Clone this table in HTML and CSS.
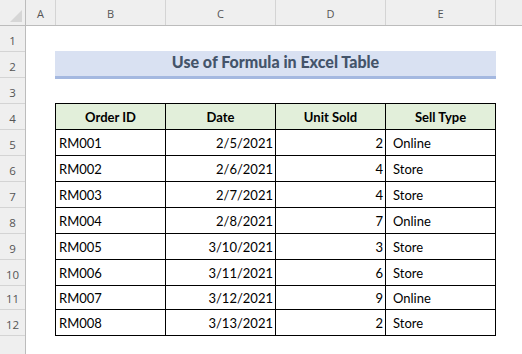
FILE: index.html
```html
<!DOCTYPE html>
<html lang="en">
<head>
    <meta charset="UTF-8">
    <meta name="viewport" content="width=device-width, initial-scale=1.0">
    <title>Use of Formula in Excel Table</title>
    <link rel="stylesheet" href="styles.css">
</head>
<body>
    <div class="sheet">
        <div class="col-heads">
            <div class="corner"><span class="corner-tri"></span></div>
            <div class="col-head col-a">A</div>
            <div class="col-head col-wide">B</div>
            <div class="col-head col-wide">C</div>
            <div class="col-head col-wide">D</div>
            <div class="col-head col-wide">E</div>
            <div class="col-head col-rest"></div>
        </div>

        <div class="sheet-body">
            <div class="row-heads">
                <div class="row-head">1</div>
                <div class="row-head">2</div>
                <div class="row-head">3</div>
                <div class="row-head">4</div>
                <div class="row-head">5</div>
                <div class="row-head">6</div>
                <div class="row-head">7</div>
                <div class="row-head">8</div>
                <div class="row-head">9</div>
                <div class="row-head">10</div>
                <div class="row-head short">11</div>
                <div class="row-head">12</div>
            </div>

            <div class="cells">
                <div class="title">Use of Formula in Excel Table</div>

                <div class="data-table">
                    <div class="cell head">Order ID</div>
                    <div class="cell head">Date</div>
                    <div class="cell head">Unit Sold</div>
                    <div class="cell head">Sell Type</div>

                    <div class="cell">RM001</div>
                    <div class="cell num">2/5/2021</div>
                    <div class="cell num">2</div>
                    <div class="cell type">Online</div>

                    <div class="cell">RM002</div>
                    <div class="cell num">2/6/2021</div>
                    <div class="cell num">4</div>
                    <div class="cell type">Store</div>

                    <div class="cell">RM003</div>
                    <div class="cell num">2/7/2021</div>
                    <div class="cell num">4</div>
                    <div class="cell type">Store</div>

                    <div class="cell">RM004</div>
                    <div class="cell num">2/8/2021</div>
                    <div class="cell num">7</div>
                    <div class="cell type">Online</div>

                    <div class="cell">RM005</div>
                    <div class="cell num">3/10/2021</div>
                    <div class="cell num">3</div>
                    <div class="cell type">Store</div>

                    <div class="cell">RM006</div>
                    <div class="cell num">3/11/2021</div>
                    <div class="cell num">6</div>
                    <div class="cell type">Store</div>

                    <div class="cell short">RM007</div>
                    <div class="cell short num">3/12/2021</div>
                    <div class="cell short num">9</div>
                    <div class="cell short type">Online</div>

                    <div class="cell">RM008</div>
                    <div class="cell num">3/13/2021</div>
                    <div class="cell num">2</div>
                    <div class="cell type">Store</div>
                </div>
            </div>
        </div>
    </div>
</body>
</html>
```

FILE: styles.css
```css
* { margin: 0; padding: 0; box-sizing: border-box; }
:root { --head-bg: #efefef; --head-line: #d4d4d4; --head-edge: #bcbcbc; --head-text: #555; --title-bg: #d9e1f2; --title-line: #a4b8e0; --title-text: #44546a; --green: #e2efda; }
body { background: white; overflow: hidden; font-family: Lato, 'Open Sans', sans-serif; color: #000; }
.sheet { width: 522px; height: 354px; display: flex; flex-direction: column; }

/* column letters */
.col-heads { display: flex; height: 26px; background: var(--head-bg); border-bottom: 1px solid var(--head-edge); }
.corner { position: relative; width: 26px; border-right: 1px solid var(--head-edge); }
.corner-tri { position: absolute; right: 3px; bottom: 3px; width: 0; height: 0; border-left: 12px solid transparent; border-bottom: 12px solid #d6d6d6; }
.col-head { display: flex; align-items: flex-end; justify-content: center; padding-bottom: 4px; border-right: 1px solid var(--head-line); font-family: 'Open Sans', sans-serif; font-size: 11px; line-height: 15px; color: var(--head-text); }
.col-a { width: 30px; }
.col-wide { width: 110px; }
.col-rest { flex: 1; border-right: none; }

/* row numbers */
.sheet-body { display: flex; flex: 1; }
.row-heads { width: 26px; background: var(--head-bg); border-right: 1px solid var(--head-edge); }
.row-head { height: 26px; display: flex; align-items: flex-end; justify-content: center; padding-bottom: 3px; border-bottom: 1px solid var(--head-line); font-family: 'Open Sans', sans-serif; font-size: 11.5px; line-height: 15px; color: var(--head-text); }
.row-head.short { height: 24px; }

/* worksheet cells */
.cells { flex: 1; padding: 25px 0 0 29px; }
.title { width: 441px; height: 28px; display: flex; align-items: center; justify-content: center; padding-bottom: 3px; background: var(--title-bg); border-bottom: 3px solid var(--title-line); color: var(--title-text); font-weight: 900; font-size: 16px; line-height: 20px; margin-bottom: 24px; }
.data-table { display: grid; grid-template-columns: repeat(4, 110px); width: 441px; border-top: 1px solid #000; border-left: 1px solid #000; }
.cell { height: 26px; display: flex; align-items: flex-end; padding: 0 3px 4px 3px; border-right: 1px solid #000; border-bottom: 1px solid #000; font-size: 13px; line-height: 16px; white-space: nowrap; }
.cell.short { height: 24px; padding-bottom: 3px; }
.cell.head { justify-content: center; background: var(--green); font-weight: bold; }
.cell.num { justify-content: flex-end; padding-right: 2px; }
.cell.type { padding-left: 7px; }
```
